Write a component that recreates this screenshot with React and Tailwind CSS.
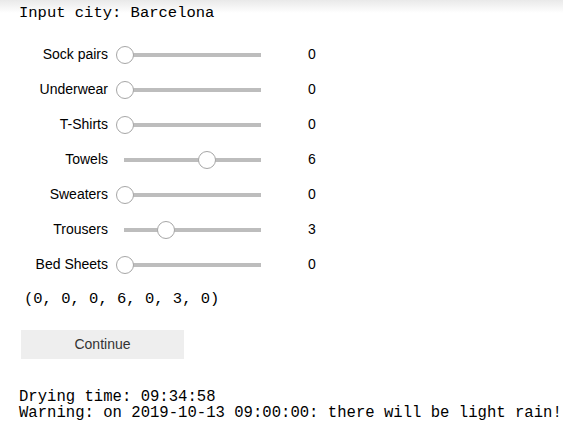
const items = [
  { label: 'Sock pairs', value: 0 },
  { label: 'Underwear', value: 0 },
  { label: 'T-Shirts', value: 0 },
  { label: 'Towels', value: 6 },
  { label: 'Sweaters', value: 0 },
  { label: 'Trousers', value: 3 },
  { label: 'Bed Sheets', value: 0 },
]

const mono = "font-['Liberation_Mono','Courier_New',monospace]"

const Slider = ({ value }) => (
  <div className="relative h-[18px] w-[154px]">
    <div className="absolute left-[8px] top-[7px] h-[4px] w-[137px] bg-[#bdbdbd]" />
    <div
      className="absolute top-0 h-[18px] w-[18px] rounded-full border border-[#a6a6a6] bg-white"
      style={{ left: value * 13.6 }}
    />
  </div>
)

const App = () => {
  const tuple = '(' + items.map((item) => item.value).join(', ') + ')'

  return (
    <div className="min-h-[434px] w-[563px] bg-[linear-gradient(to_bottom,#e9e9e9_0px,#ffffff_13px)] pt-[5px] text-black">
      <div className={`${mono} pl-[19px] text-[15.5px] leading-[17px]`}>Input city: Barcelona</div>

      <div className="mt-[15px] font-['Liberation_Sans',Arial,sans-serif] text-[14px]">
        {items.map((item) => (
          <div key={item.label} className="flex h-[35px] items-center">
            <div className="w-[108px] text-right">{item.label}</div>
            <div className="ml-[8px]">
              <Slider value={item.value} />
            </div>
            <div className="ml-[38px]">{item.value}</div>
          </div>
        ))}
      </div>

      <div className={`${mono} mt-[9px] pl-[24px] text-[15.5px] leading-[17px]`}>{tuple}</div>

      <button className="ml-[21px] mt-[22px] block h-[29px] w-[163px] bg-[#eeeeee] font-['Liberation_Sans',Arial,sans-serif] text-[14px] text-[#333333]">
        Continue
      </button>

      <div className={`${mono} mt-[29.5px] pl-[19px] text-[15.6px] leading-[16.5px] whitespace-pre`}>
        <div>Drying time: 09:34:58</div>
        <div>Warning: on 2019-10-13 09:00:00: there will be light rain!</div>
      </div>
    </div>
  )
}

export default App
